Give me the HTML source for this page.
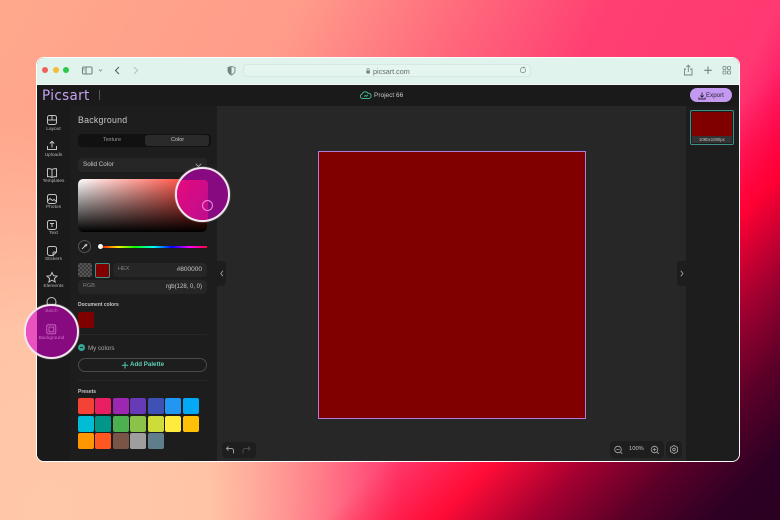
<!DOCTYPE html>
<html><head><meta charset="utf-8">
<style>
html,body{margin:0;padding:0}
body{width:780px;height:520px;overflow:hidden;position:relative;font-family:"Liberation Sans",sans-serif;
background:
linear-gradient(135deg,rgba(255,0,40,0) 65%,rgba(255,0,40,.8) 73.5%,#a00030 81%,#5c0028 87.7%,#2e0024 94.6%,#2a0020 100%),
radial-gradient(ellipse 350px 400px at 50px 510px,#ffc8a8 0%,#ffc4a6 45%,rgba(255,190,160,0) 100%),
linear-gradient(118deg,#ffa98c 0,#ff9b8a 270px,#ff6a7c 411px,#ff3e72 544px,#ff3a72 690px,#ff0060 770px,#ff0060 100%)}
.a{position:absolute;box-sizing:border-box}
.t{position:absolute;white-space:nowrap;line-height:1}
svg{position:absolute;overflow:visible}
.rl{position:absolute;left:37px;width:33px;text-align:center;font-size:4.8px;color:#b5b5b5;line-height:1}
.ic{fill:none;stroke:#c4c4c4;stroke-width:1}
.s{position:absolute;width:16px;height:16px;border-radius:2px}
</style></head><body>

<div class="a" style="left:36px;top:57px;width:704px;height:405px;border-radius:8px;background:#fff"></div>
<div class="a" style="left:37px;top:58px;width:702px;height:403px;border-radius:7px;overflow:hidden;background:#1b1b1b">
  <div class="a" style="left:0;top:0;width:702px;height:27px;background:#e0f3ec;border-bottom:1px solid #f2faf7"></div>
  <div class="a" style="left:0;top:28px;width:702px;height:20px;background:#1a1a1a"></div>
  <div class="a" style="left:180px;top:48px;width:469px;height:355px;background:#272727"></div>
  <div class="a" style="left:33px;top:48px;width:147px;height:355px;background:#1d1d1d;border-radius:6px 0 0 0"></div>
  <div class="a" style="left:0;top:48px;width:33px;height:355px;background:#1a1a1a"></div>
  <div class="a" style="left:649px;top:48px;width:53px;height:355px;background:#1d1d1d"></div>
</div>

<!-- URL bar -->
<div class="a" style="left:243px;top:64px;width:288px;height:13px;border-radius:4px;background:#e5f5ef;border:1px solid #d5e8e1"></div>

<!-- Traffic lights -->
<div class="a" style="left:42px;top:67px;width:6px;height:6px;border-radius:50%;background:#f1605a"></div>
<div class="a" style="left:53px;top:67px;width:6px;height:6px;border-radius:50%;background:#f3bd32"></div>
<div class="a" style="left:63px;top:67px;width:6px;height:6px;border-radius:50%;background:#2ec94b"></div>

<!-- Browser toolbar icons -->
<svg style="left:0;top:0" width="780" height="100" fill="none" stroke="#75837f" stroke-width="1.1">
  <rect x="82.5" y="67" width="9.5" height="7" rx="1.2"/><path d="M86 67v7"/><path d="M83 68.5h2M83 70h2" stroke-width=".6"/>
  <path d="M99 69.5l1.5 1.5 1.5-1.5" stroke-width=".8"/>
  <path d="M119 67l-3.5 3.500 3.500 3.500" stroke="#5c6966" stroke-width="1.2"/>
  <path d="M134 67l3.500 3.500-3.500 3.500" stroke="#b8c8c3" stroke-width="1.2"/>
  <path d="M231.500 66.500l3.500 1v3c0 2.200-1.500 3.500-3.500 4.500-2-1-3.500-2.300-3.500-4.500v-3z" stroke-width=".9"/>
  <path d="M231.500 66.500v9c-2-1-3.500-2.300-3.500-4.500v-3z" fill="#75837f" stroke="none"/>
  <rect x="366.300" y="70.500" width="3.600" height="3" rx=".5" fill="#75837f" stroke="none"/><path d="M367 70.500v-1a1.100 1.100 0 0 1 2.200 0v1" stroke-width=".6"/>
  <path d="M525.300 69a2.600 2.600 0 1 1-1.200-1.200M524 66.500v1.500h1.500" stroke-width=".7"/>
  <path d="M686 69h-1.500v6h7.500v-6H690M688.300 72v-6.500M686.500 67l1.800-1.800 1.800 1.800" stroke-width=".9"/>
  <path d="M708 66.500v7.500M704.300 70.300h7.500" stroke-width="1.100"/>
  <rect x="723" y="66.500" width="3" height="3" rx=".6" stroke-width=".8"/><rect x="727.500" y="66.500" width="3" height="3" rx=".6" stroke-width=".8"/><rect x="723" y="71" width="3" height="3" rx=".6" stroke-width=".8"/><rect x="727.500" y="71" width="3" height="3" rx=".6" stroke-width=".8"/>
</svg>
<div class="t" style="left:373px;top:67.500px;font-size:7.200px;color:#5f6c69">picsart.com</div>

<!-- App header -->
<div class="t" style="left:42px;top:88.500px;font-size:14.500px;color:#c6a2f2;letter-spacing:.4px;font-family:'DejaVu Sans',sans-serif;transform:scaleX(.93);transform-origin:left">Picsart</div>
<div class="a" style="left:99px;top:90px;width:1px;height:10px;background:#555"></div>
<svg style="left:360px;top:90px" width="12" height="10" fill="none" stroke="#3fae93" stroke-width="1"><path d="M3 8.500H2.500A2.200 2.200 0 0 1 2 4.200 3.300 3.300 0 0 1 8 3.300 2.600 2.600 0 0 1 9 8.500zM4 6.500l1.500-1 1 .8 1.500-1.500"/></svg>
<div class="t" style="left:374px;top:92.500px;font-size:6.500px;color:#c9c9c9">Project 66</div>
<div class="a" style="left:690px;top:88px;width:42px;height:14px;border-radius:7px;background:#c39af0"></div>
<svg style="left:698px;top:91.500px" width="8" height="8" fill="none" stroke="#2c2338" stroke-width=".9"><path d="M4 .5v4.500M2.300 3.500L4 5.200l1.700-1.700M.8 5.500v1.500h6.400V5.500"/></svg>
<div class="t" style="left:706px;top:92.500px;font-size:6.200px;color:#2c2338">Export</div>

<!-- Left rail -->
<svg style="left:0;top:0" width="80" height="320" class="ic">
  <rect x="47.500" y="115.500" width="9" height="9" rx="2"/><path d="M47.500 120h9M52 115.500v4.500"/>
  <path d="M47.500 146v3.500h9V146M52 147.500v-6M49.800 143.500l2.200-2.200 2.200 2.200"/>
  <path d="M52 169.500c-1.500-1-3-1-4.500-.8v8c1.500-.2 3-.2 4.500.8 1.500-1 3-1 4.500-.8v-8c-1.500-.2-3-.2-4.500.8zM52 169.500v8"/>
  <rect x="47.500" y="194.500" width="9" height="9" rx="2"/><path d="M47.500 201l2.500-2.500 2.500 2 1.500-1 2.500 2"/>
  <rect x="47.500" y="220.500" width="9" height="9" rx="2"/><path d="M50 223.500h4M52 223.500v3.500"/>
  <path d="M49.500 246.500h5a2 2 0 0 1 2 2v3.500l-3.500 3.500h-3.500a2 2 0 0 1-2-2v-5a2 2 0 0 1 2-2zM53 255.500v-2a1.500 1.500 0 0 1 1.500-1.500h2"/>
  <path d="M52 272.500l1.500 3.200 3.500.4-2.600 2.400.7 3.500-3.100-1.800-3.100 1.800.7-3.500-2.600-2.400 3.500-.4z"/>
  <circle cx="51.500" cy="302" r="4.500"/>
</svg>
<div class="rl" style="top:127.500px">Layout</div>
<div class="rl" style="top:153.500px">Uploads</div>
<div class="rl" style="top:179.500px">Templates</div>
<div class="rl" style="top:206px">Photos</div>
<div class="rl" style="top:232px">Text</div>
<div class="rl" style="top:258px">Stickers</div>
<div class="rl" style="top:285px">Elements</div>

<!-- Panel -->
<div class="t" style="left:78px;top:116px;font-size:8.800px;color:#c8c8c8;letter-spacing:.25px">Background</div>
<div class="a" style="left:78px;top:134px;width:133px;height:13px;border-radius:4px;background:#111"></div>
<div class="a" style="left:145px;top:135px;width:64px;height:11px;border-radius:3px;background:#2a2a2a"></div>
<div class="t" style="left:103px;top:138px;font-size:5.500px;color:#9a9a9a">Texture</div>
<div class="t" style="left:171px;top:138px;font-size:5.500px;color:#c8c8c8">Color</div>
<div class="a" style="left:78px;top:158px;width:129px;height:14px;border-radius:4px;background:#262626"></div>
<div class="t" style="left:83px;top:161.500px;font-size:6.300px;color:#c8c8c8">Solid Color</div>
<svg style="left:195px;top:163px" width="7" height="5" fill="none" stroke="#aaa" stroke-width=".8"><path d="M.8 .8L3.500 3.500 6.200 .8"/></svg>

<div class="a" style="left:78px;top:179px;width:129px;height:53px;border-radius:5px;background:linear-gradient(to bottom,rgba(0,0,0,0),#000),linear-gradient(to right,#fff,#ff2a1a)"></div>

<div class="a" style="left:78px;top:240px;width:13px;height:13px;border-radius:50%;border:1px solid #555;background:#1d1d1d"></div>
<svg style="left:81px;top:243px" width="7" height="7" fill="none" stroke="#ccc" stroke-width=".9"><path d="M1 6l3-3M3.500 1.800l1.700 1.700M4.300 2.200l1-1 .7.700-1 1"/></svg>
<div class="a" style="left:100px;top:245.500px;width:107px;height:2.500px;background:linear-gradient(to right,#ff0000 0%,#ffee00 17%,#00ff00 33%,#00ffff 50%,#0000ff 67%,#ff00ff 84%,#ff0040 100%)"></div>
<div class="a" style="left:98px;top:244px;width:5px;height:5px;border-radius:50%;background:#fff"></div>

<div class="a" style="left:78px;top:263px;width:14px;height:14px;border-radius:2px;background:repeating-conic-gradient(#555 0 25%,#3a3a3a 0 50%) 0 0/4px 4px"></div>
<div class="a" style="left:95px;top:263px;width:15px;height:15px;border-radius:2px;background:#800000;border:1px solid #3f8f88"></div>
<div class="a" style="left:113px;top:263px;width:94px;height:14px;border-radius:4px;background:#262626"></div>
<div class="t" style="left:118px;top:267px;font-size:5.500px;color:#808080">HEX</div>
<div class="t" style="right:578px;top:266.500px;font-size:6.500px;color:#c8c8c8">#800000</div>
<div class="a" style="left:78px;top:280px;width:129px;height:14px;border-radius:4px;background:#262626"></div>
<div class="t" style="left:83px;top:284px;font-size:5.500px;color:#808080">RGB</div>
<div class="t" style="right:578px;top:284px;font-size:6px;color:#c8c8c8">rgb(128, 0, 0)</div>

<div class="t" style="left:78px;top:303px;font-size:5px;font-weight:bold;color:#c8c8c8">Document colors</div>
<div class="a" style="left:78px;top:312px;width:16px;height:16px;border-radius:2px;background:#800000"></div>
<div class="a" style="left:78px;top:334px;width:129px;height:1px;background:#272727"></div>
<div class="a" style="left:78px;top:344px;width:7px;height:7px;border-radius:50%;background:#36a697"></div>
<div class="a" style="left:80px;top:347px;width:3px;height:1px;background:#16302c"></div>
<div class="t" style="left:88px;top:345.500px;font-size:6.200px;color:#a8a8a8">My colors</div>
<div class="a" style="left:78px;top:358px;width:129px;height:14px;border-radius:7px;border:1px solid #4a4a4a"></div>
<svg style="left:121px;top:361px" width="8" height="8" stroke="#4fc7ae" stroke-width="1"><path d="M4 1v6.500M.8 4.200h6.400"/></svg>
<div class="t" style="left:130px;top:361.500px;font-size:6.200px;font-weight:bold;color:#5fd0b8">Add Palette</div>
<div class="a" style="left:78px;top:380px;width:129px;height:1px;background:#272727"></div>
<div class="t" style="left:78px;top:389.500px;font-size:5px;font-weight:bold;color:#c8c8c8">Presets</div>

<div class="s" style="left:78px;top:398px;background:#f44336"></div>
<div class="s" style="left:95px;top:398px;background:#e91e63"></div>
<div class="s" style="left:113px;top:398px;background:#9c27b0"></div>
<div class="s" style="left:130px;top:398px;background:#673ab7"></div>
<div class="s" style="left:148px;top:398px;background:#3f51b5"></div>
<div class="s" style="left:165px;top:398px;background:#2196f3"></div>
<div class="s" style="left:183px;top:398px;background:#03a9f4"></div>
<div class="s" style="left:78px;top:416px;background:#00bcd4"></div>
<div class="s" style="left:95px;top:416px;background:#009688"></div>
<div class="s" style="left:113px;top:416px;background:#4caf50"></div>
<div class="s" style="left:130px;top:416px;background:#8bc34a"></div>
<div class="s" style="left:148px;top:416px;background:#cddc39"></div>
<div class="s" style="left:165px;top:416px;background:#ffeb3b"></div>
<div class="s" style="left:183px;top:416px;background:#ffc107"></div>
<div class="s" style="left:78px;top:433px;background:#ff9800"></div>
<div class="s" style="left:95px;top:433px;background:#ff5722"></div>
<div class="s" style="left:113px;top:433px;background:#795548"></div>
<div class="s" style="left:130px;top:433px;background:#9e9e9e"></div>
<div class="s" style="left:148px;top:433px;background:#607d8b"></div>

<!-- Collapse handles -->
<div class="a" style="left:217px;top:261px;width:9px;height:25px;border-radius:0 4px 4px 0;background:#1d1d1d"></div>
<svg style="left:220px;top:270px" width="4" height="7" fill="none" stroke="#aaa" stroke-width=".8"><path d="M3 .8L.8 3.500 3 6.200"/></svg>
<div class="a" style="left:677px;top:261px;width:9px;height:25px;border-radius:4px 0 0 4px;background:#1d1d1d"></div>
<svg style="left:680px;top:270px" width="4" height="7" fill="none" stroke="#aaa" stroke-width=".8"><path d="M.8 .8L3 3.500 .8 6.200"/></svg>

<!-- Artboard -->
<div class="a" style="left:318px;top:151px;width:268px;height:268px;background:#800000;border:1px solid #b07ad8"></div>

<!-- Thumbnail -->
<div class="a" style="left:690px;top:110px;width:44px;height:35px;border:1px solid #3f8f88;border-radius:2px;background:#1d1d1d"></div>
<div class="a" style="left:692px;top:112px;width:40px;height:31px;background:#800000"></div>
<div class="a" style="left:692px;top:136px;width:40px;height:7px;background:#333"></div>
<div class="t" style="left:699px;top:137.500px;font-size:4.300px;color:#c4c4c4">1080x1080px</div>

<!-- Undo / redo -->
<div class="a" style="left:222px;top:442px;width:34px;height:16px;border-radius:4px;background:#1e1e1e"></div>
<svg style="left:225px;top:445px" width="28" height="10" fill="none" stroke-width="1"><path d="M8.500 8.500V5.500a2 2 0 0 0-2-2H1.500M3.500 1.500l-2 2 2 2" stroke="#9a9a9a"/><path d="M18 8.500V5.500a2 2 0 0 1 2-2h5M23 1.500l2 2-2 2" stroke="#4a4a4a"/></svg>

<!-- Zoom -->
<div class="a" style="left:610px;top:441px;width:54px;height:17px;border-radius:4px;background:#1e1e1e"></div>
<div class="a" style="left:666px;top:441px;width:16px;height:17px;border-radius:4px;background:#1e1e1e"></div>
<svg style="left:0;top:0" width="780" height="520" fill="none" stroke="#a8a8a8" stroke-width=".8">
  <circle cx="618" cy="449.500" r="3.300"/><path d="M620.500 452l1.800 1.800M616.300 449.500h3.400"/>
  <circle cx="654.500" cy="449.500" r="3.300"/><path d="M657 452l1.800 1.800M652.800 449.500h3.400M654.500 447.800v3.400"/>
  <path d="M674 445.500l3.600 2v4l-3.600 2-3.600-2v-4z"/><circle cx="674" cy="449.500" r="1.300"/>
</svg>
<div class="t" style="left:629px;top:447px;font-size:5.800px;color:#c4c4c4">100%</div>

<!-- Magnifier 1 -->
<div class="a" style="left:175px;top:167px;width:55px;height:55px;border-radius:50%;border:2px solid #f2e6ee;box-shadow:0 0 1.500px rgba(255,255,255,.6);background:#880a80;overflow:hidden">
  <div class="a" style="left:-10px;top:10.500px;width:40.500px;height:50px;border-radius:4px;background:linear-gradient(125deg,#ee0a78 0%,#c40c8c 75%)"></div>
</div>
<div class="a" style="left:202px;top:200px;width:11px;height:11px;border-radius:50%;border:1.500px solid #f28ad8"></div>

<!-- Magnifier 2 -->
<div class="a" style="left:24px;top:304px;width:55px;height:55px;border-radius:50%;border:2px solid #f2e6ee;box-shadow:0 0 1.500px rgba(255,255,255,.6);background:#880a80;overflow:hidden">
  <div class="a" style="left:0;top:0;width:11px;height:55px;background:#ea52c0"></div>
</div>
<svg style="left:46px;top:324px" width="11" height="11" fill="none" stroke="#d070c8" stroke-width=".8"><rect x=".8" y=".8" width="9" height="9" rx="1.500"/><rect x="3" y="3" width="4.800" height="4.800"/></svg>
<div class="t" style="left:24px;width:55px;text-align:center;top:310px;font-size:4.800px;color:#c468bf">Batch</div>
<div class="t" style="left:24px;width:55px;text-align:center;top:336.500px;font-size:4.800px;color:#d070c8">Background</div>

</body></html>
